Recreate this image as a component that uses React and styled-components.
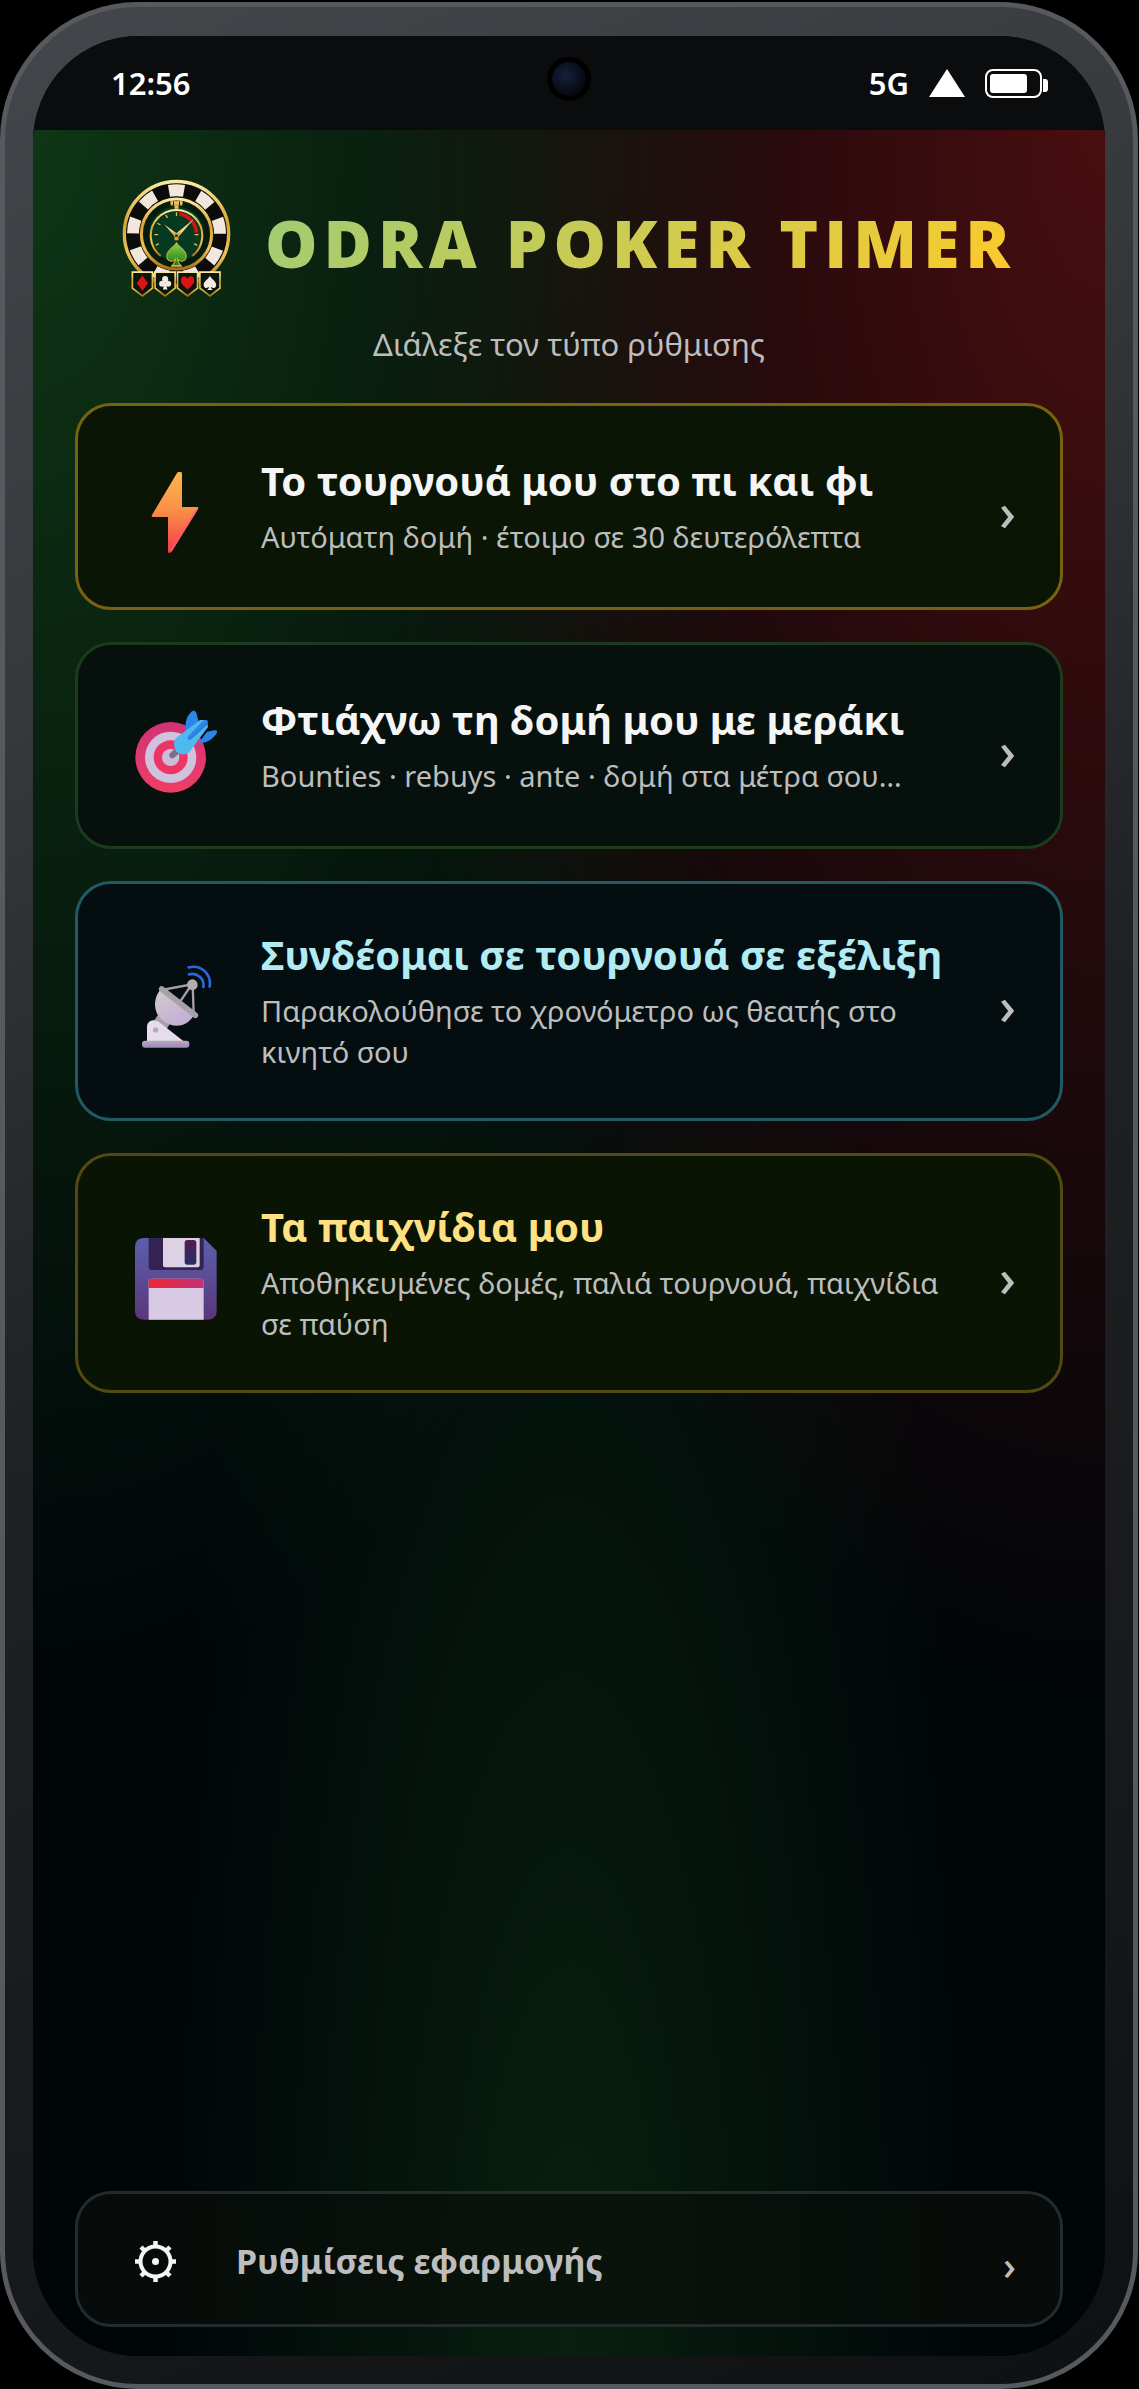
import styled, { createGlobalStyle } from "styled-components";

const GlobalStyle = createGlobalStyle`
  * {
    box-sizing: border-box;
  }

  body {
    margin: 0;
    background: #000;
    font-family: "Noto Sans", "Open Sans", sans-serif;
    color: #f5f5f5;
  }
`;

const Page = styled.div`
  display: flex;
  min-height: 100vh;
  padding: 2px 1px 0 0;
`;

const Phone = styled.div`
  display: flex;
  flex: 1;
  padding: 29px 28px 28px;
  border: 5px solid #56595d;
  border-radius: 138px;
  background: linear-gradient(155deg, #45464b 0%, #36383c 25%, #202124 50%, #17181a 80%, #0f1011 100%);
`;

const Screen = styled.div`
  display: flex;
  flex: 1;
  flex-direction: column;
  overflow: hidden;
  border-radius: 106px;
  background: #000407;
`;

const StatusBar = styled.header`
  display: grid;
  grid-template-columns: 1fr auto 1fr;
  align-items: center;
  height: 94px;
  padding: 0 56px 0 78px;
  background: #0a0c0e;
  color: #fff;
  font-size: 31px;
  font-weight: 600;
`;

const Camera = styled.span`
  width: 44px;
  height: 44px;
  margin: 0 22px 8px 0;
  border: 5px solid #000;
  border-radius: 50%;
  background: radial-gradient(circle at 40% 40%, #14213d, #04060c 75%);
`;

const StatusIcons = styled.div`
  display: flex;
  align-items: center;
  justify-content: flex-end;
  gap: 20px;
`;

const Content = styled.main`
  display: flex;
  flex: 1;
  flex-direction: column;
  padding: 44px 42px 29px;
  background:
    radial-gradient(ellipse at top left, rgba(27, 94, 32, 0.55), transparent 50%),
    radial-gradient(ellipse at top right, rgba(183, 28, 28, 0.4), transparent 50%),
    radial-gradient(ellipse at bottom, rgba(27, 94, 32, 0.3), transparent 55%),
    #000508;
`;

const Brand = styled.div`
  display: flex;
  align-items: center;
  justify-content: center;
  gap: 34px;
`;

const BrandName = styled.h1`
  margin: 0;
  padding-top: 8px;
  background: linear-gradient(135deg, #9ccc78, #ffca28);
  background-clip: text;
  color: transparent;
  font-family: "Open Sans", "Noto Sans", sans-serif;
  font-size: 66px;
  font-weight: 800;
  line-height: 120px;
  letter-spacing: 6px;
  white-space: nowrap;
`;

const Tagline = styled.p`
  margin: 18px 0 35px;
  color: #bdbdbd;
  font-size: 31px;
  line-height: 48px;
  text-align: center;
`;

const Menu = styled.nav`
  display: flex;
  flex-direction: column;
  gap: 32px;
`;

const Card = styled.button`
  display: flex;
  align-items: center;
  min-height: 207px;
  padding: 46px 44px 46px 57px;
  border: 3px solid ${({ $border }) => $border};
  border-radius: 36px;
  background: ${({ $background }) => $background};
  color: #bdbdbd;
  font-family: inherit;
  text-align: left;
  cursor: pointer;
`;

const CardIcon = styled.span`
  display: flex;
  flex: none;
  width: 82px;
  margin: 12px 44px 0 0;
`;

const CardText = styled.span`
  display: flex;
  flex: 1;
  flex-direction: column;
  gap: 10px;
`;

const CardTitle = styled.span`
  color: ${({ $color }) => $color};
  font-size: 40px;
  font-weight: 700;
  line-height: 50px;
`;

const CardDescription = styled.span`
  font-size: 29px;
  line-height: 41px;
`;

const Arrow = styled.span`
  flex: none;
  margin-left: 30px;
  padding-top: 8px;
  font-size: ${({ $small }) => ($small ? "40px" : "52px")};
  font-weight: 500;
  line-height: 50px;
`;

const SettingsButton = styled(Card)`
  min-height: 136px;
  margin-top: auto;
  padding-top: 4px;
  padding-bottom: 0;
`;

const SettingsLabel = styled.span`
  flex: 1;
  margin-left: 60px;
  font-size: 34px;
  font-weight: 700;
`;

function Logo() {
  return (
    <svg width="109" height="118" viewBox="44 32 326 352" aria-hidden="true">
      <defs>
        <linearGradient id="gold" x1="0" y1="0" x2="0" y2="1">
          <stop offset="0" stopColor="#fbe9a0" />
          <stop offset="0.4" stopColor="#d9a233" />
          <stop offset="0.7" stopColor="#f0c55a" />
          <stop offset="1" stopColor="#a86f16" />
        </linearGradient>
        <linearGradient id="leaf" x1="0" y1="0" x2="0" y2="1">
          <stop offset="0" stopColor="#8ed04a" />
          <stop offset="1" stopColor="#157a14" />
        </linearGradient>
        <path id="spade" d="M0-16C4-9 15-3 15 5c0 8-9 10-13 4 0 4 2 6 5 8H-7c3-2 5-4 5-8-4 6-13 4-13-4C-15-3-4-9 0-16z" />
      </defs>
      <circle cx="207" cy="195" r="156" fill="#0b0b0b" stroke="url(#gold)" strokeWidth="10" />
      <circle
        cx="207"
        cy="195"
        r="130"
        fill="none"
        stroke="#f1e7dd"
        strokeWidth="36"
        pathLength="18"
        strokeDasharray="1 1"
        transform="rotate(-100 207 195)"
      />
      <circle cx="207" cy="196" r="105" fill="#063a20" stroke="#221604" strokeWidth="13" />
      <circle cx="207" cy="196" r="105" fill="none" stroke="url(#gold)" strokeWidth="9" />
      <circle cx="207" cy="196" r="90" fill="none" stroke="#04130b" strokeWidth="16" opacity="0.75" />
      <path d="M189 98h36v13h-12v13h-12v-13h-12z" fill="url(#gold)" />
      <path d="M198 98v13M216 98v13" stroke="#3a2604" strokeWidth="3" />
      <path d="M160 262a77 77 0 1 1 94 0" fill="none" stroke="url(#gold)" strokeWidth="6" />
      <path d="M216 136a62 62 0 0 1 51 56" fill="none" stroke="#d41414" strokeWidth="11" />
      <path
        d="M207 131v11M175 139l5 9M150 164l9 5M141 198h11M145 230l9-5M261 198h12M260 225l9 5"
        stroke="#e2bb5a"
        strokeWidth="4"
      />
      <path d="M170 167l43 31-9 8zM259 151l-46 53-10-7z" fill="#f4d98a" />
      <path d="M192 188l15 8 15-8-9 15v12h-12v-12z" fill="#d8a63c" />
      <circle cx="207" cy="201" r="5" fill="#5b3b08" />
      <path d="M207 222c8 14 29 22 29 40 0 17-19 20-26 9 0 10 4 14 11 21h-28c7-7 11-11 11-21-7 11-26 8-26-9 0-18 21-26 29-40z" fill="url(#leaf)" stroke="#d7ab45" strokeWidth="3" />
      <path d="M192 291h30" stroke="#d7ab45" strokeWidth="5" />
      {[105, 173, 240, 307].map((x) => (
        <path key={x} d={`M${x - 30} 310h60v48l-30 23-30-23z`} fill="#08170d" stroke="url(#gold)" strokeWidth="5" />
      ))}
      <path d="M105 320l17 23-17 23-17-23z" fill="#dc1313" />
      <g fill="#f3ebe2">
        <circle cx="173" cy="331" r="9" />
        <circle cx="164" cy="345" r="9" />
        <circle cx="182" cy="345" r="9" />
        <path d="M173 338l7 24h-14z" />
      </g>
      <path d="M240 363c-6-9-20-15-20-29 0-14 17-15 20-4 3-11 20-10 20 4 0 14-14 20-20 29z" fill="#dc1313" />
      <use href="#spade" transform="translate(307 342) scale(1.25)" fill="#f3ebe2" />
    </svg>
  );
}

function BoltIcon() {
  return (
    <svg width="82" height="84" viewBox="0 0 82 84" aria-hidden="true">
      <defs>
        <linearGradient id="bolt" x1="0" y1="0" x2="0" y2="1">
          <stop offset="0" stopColor="#fdb54a" />
          <stop offset="0.45" stopColor="#fb9248" />
          <stop offset="1" stopColor="#f33b4b" />
        </linearGradient>
      </defs>
      <path d="M43 1h3q1 0 1 2v33h15q2 0 1 2L37 80q-1 2-3 2-1 0-1-2V46H18q-2 0-1-2L42 2z" fill="url(#bolt)" />
      <path d="M62 38L36 80" stroke="#fb5f7c" strokeWidth="2" opacity="0.7" />
    </svg>
  );
}

function TargetIcon() {
  return (
    <svg width="82" height="84" viewBox="75 64 246 250" aria-hidden="true">
      <defs>
        <linearGradient id="rim" x1="0" y1="0" x2="0" y2="1">
          <stop offset="0" stopColor="#d23279" />
          <stop offset="1" stopColor="#ee3e65" />
        </linearGradient>
      </defs>
      <circle cx="182" cy="205" r="106" fill="url(#rim)" />
      <circle cx="182" cy="205" r="77" fill="#cfc2dd" />
      <circle cx="182" cy="205" r="51" fill="#ed3565" />
      <circle cx="182" cy="205" r="26" fill="#cdbcd7" />
      <path d="M187 199l20-18" stroke="#7c6c8c" strokeWidth="18" strokeLinecap="round" />
      <path d="M228 124c-5-24 4-46 18-57 8-5 13 2 15 12l5 20-30 30zM266 162l25-34 23-4c8-1 9 6 4 12-12 16-29 28-52 26z" fill="#2c85ea" />
      <path d="M198 147l72-54h21l3 21-53 71c-12 15-31 14-41 3-9-11-11-29-2-41z" fill="#4db9ef" />
      <path d="M235 141l45-46q7-4 12 0 4 5 0 12l-47 43q-7 5-11 1-3-5 1-10z" fill="#2a7fe3" />
      <path d="M234 147l54-50" stroke="#55b5f5" strokeWidth="2" opacity="0.6" />
    </svg>
  );
}

function DishIcon() {
  return (
    <svg width="82" height="84" viewBox="75 47 246 250" aria-hidden="true">
      <defs>
        <linearGradient id="bowl" x1="0" y1="0" x2="0.5" y2="1">
          <stop offset="0" stopColor="#d2c9cd" />
          <stop offset="1" stopColor="#c5b0d5" />
        </linearGradient>
        <linearGradient id="base" x1="0" y1="0" x2="0" y2="1">
          <stop offset="0" stopColor="#b7abb8" />
          <stop offset="1" stopColor="#a386bf" />
        </linearGradient>
      </defs>
      <path d="M143 197l36 27-14 22-40-22z" fill="#a89fa7" />
      <path d="M111 274v-42c0-20 22-26 37-14l72 56z" fill="#e6dcec" />
      <circle cx="137" cy="241" r="8" fill="#b5abb9" />
      <rect x="96" y="273" width="142" height="21" rx="9" fill="url(#base)" />
      <path d="M150 121c-24 32-18 72 9 92 29 22 66 23 91-13z" fill="url(#bowl)" />
      <path d="M155 121l90-17-34 51M248 104l3 88" fill="none" stroke="#a9a0a5" strokeWidth="7" />
      <path d="M155 118l101 79" stroke="#aaa1a8" strokeWidth="17" strokeLinecap="round" />
      <circle cx="247" cy="105" r="16" fill="#b5adb2" />
      <path d="M237 74c25-6 47 13 43 38M236 53c38-9 69 20 63 58" fill="none" stroke="#2d67dc" strokeWidth="8" strokeLinecap="round" />
    </svg>
  );
}

function FloppyIcon() {
  return (
    <svg width="82" height="82" viewBox="76 84 246 246" aria-hidden="true">
      <defs>
        <linearGradient id="disk" x1="0" y1="0" x2="0" y2="1">
          <stop offset="0" stopColor="#5c60ae" />
          <stop offset="1" stopColor="#5a3779" />
        </linearGradient>
        <linearGradient id="shutter" x1="0" y1="0" x2="0" y2="1">
          <stop offset="0" stopColor="#531b4e" />
          <stop offset="1" stopColor="#252f69" />
        </linearGradient>
        <linearGradient id="stripe">
          <stop offset="0" stopColor="#ec2936" />
          <stop offset="1" stopColor="#c52f78" />
        </linearGradient>
      </defs>
      <path d="M103 84h179l39 39v180q0 26-26 26H103q-27 0-27-26V111q0-27 27-27z" fill="url(#disk)" />
      <path d="M117 84h165v87q0 9-9 9H126q-9 0-9-9z" fill="#332353" />
      <path d="M160 84h110v82q0 6-6 6H166q-6 0-6-6z" fill="#ddd2e4" />
      <rect x="225" y="90" width="35" height="74" rx="8" fill="url(#shutter)" />
      <path d="M117 329V216q0-10 10-10h145q10 0 10 10v113z" fill="#d8cae5" />
      <path d="M117 234v-18q0-10 10-10h145q10 0 10 10v18z" fill="url(#stripe)" />
    </svg>
  );
}

function GearIcon() {
  return (
    <svg width="41" height="41" viewBox="0 0 41 41" fill="none" stroke="#f5f5f5" aria-hidden="true">
      <circle cx="20.5" cy="20.5" r="15" strokeWidth="4" />
      <path
        d="M20.500 0v5M20.500 36v5M0 20.500h5M36 20.500h5M6 6l4 4M31 31l4 4M6 35l4-4M31 10l4-4"
        strokeWidth="4.500"
      />
      <circle cx="20.500" cy="20.500" r="3.500" fill="#f5f5f5" stroke="none" />
    </svg>
  );
}

const options = [
  {
    title: "Το τουρνουά μου στο πι και φι",
    description: "Αυτόματη δομή · έτοιμο σε 30 δευτερόλεπτα",
    icon: BoltIcon,
    color: "#f5f5f5",
    border: "#78620f",
    background: "#0a1505",
  },
  {
    title: "Φτιάχνω τη δομή μου με μεράκι",
    description: "Bounties · rebuys · ante · δομή στα μέτρα σου…",
    icon: TargetIcon,
    color: "#f5f5f5",
    border: "#1c3a1e",
    background: "#06100c",
  },
  {
    title: "Συνδέομαι σε τουρνουά σε εξέλιξη",
    description: "Παρακολούθησε το χρονόμετρο ως θεατής στο κινητό σου",
    icon: DishIcon,
    color: "#b2ebf2",
    border: "#215a64",
    background: "#040d10",
  },
  {
    title: "Τα παιχνίδια μου",
    description: "Αποθηκευμένες δομές, παλιά τουρνουά, παιχνίδια σε παύση",
    icon: FloppyIcon,
    color: "#ffe082",
    border: "#54490f",
    background: "#0a1405",
  },
];

export default function App() {
  return (
    <Page>
      <GlobalStyle />
      <Phone>
        <Screen>
          <StatusBar>
            <span>12:56</span>
            <Camera />
            <StatusIcons>
              <span>5G</span>
              <svg width="36" height="28" viewBox="0 0 36 28" aria-hidden="true">
                <path d="M18 0l18 28H0z" fill="#fff" />
              </svg>
              <svg width="64" height="29" viewBox="0 0 64 29" aria-hidden="true">
                <rect x="1" y="1" width="55" height="27" rx="7" fill="none" stroke="#fff" strokeWidth="2" />
                <rect x="5" y="5" width="37" height="19" rx="3" fill="#fff" />
                <path d="M58 10h2q3 0 3 3v7q0 3-3 3h-2z" fill="#fff" />
              </svg>
            </StatusIcons>
          </StatusBar>
          <Content>
            <Brand>
              <Logo />
              <BrandName>ODRA POKER TIMER</BrandName>
            </Brand>
            <Tagline>Διάλεξε τον τύπο ρύθμισης</Tagline>
            <Menu>
              {options.map(({ title, description, icon: Icon, color, border, background }) => (
                <Card key={title} type="button" $border={border} $background={background}>
                  <CardIcon>
                    <Icon />
                  </CardIcon>
                  <CardText>
                    <CardTitle $color={color}>{title}</CardTitle>
                    <CardDescription>{description}</CardDescription>
                  </CardText>
                  <Arrow>›</Arrow>
                </Card>
              ))}
            </Menu>
            <SettingsButton type="button" $border="#222c2e" $background="rgba(10, 14, 10, 0.7)">
              <GearIcon />
              <SettingsLabel>Ρυθμίσεις εφαρμογής</SettingsLabel>
              <Arrow $small>›</Arrow>
            </SettingsButton>
          </Content>
        </Screen>
      </Phone>
    </Page>
  );
}
